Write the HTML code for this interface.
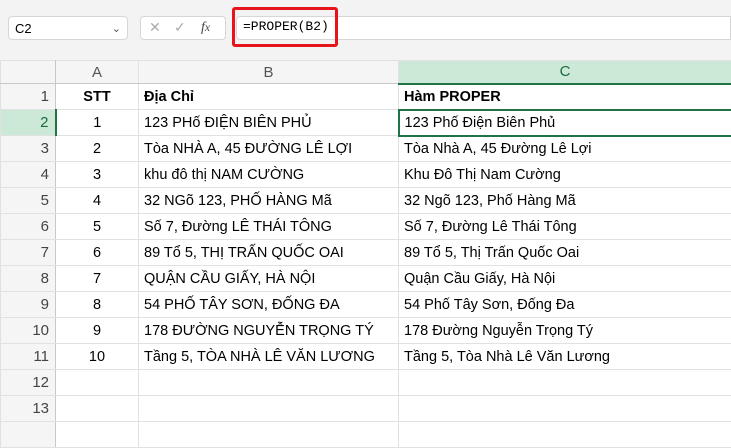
<html><head><style>
body{margin:0;width:731px;height:429px;overflow:hidden;background:#fff;font-family:"Liberation Sans",sans-serif;position:relative}
.top{position:absolute;left:0;top:0;width:731px;height:60px;background:#f3f3f3}
.nb{position:absolute;left:8px;top:16px;width:120px;height:24px;background:#fff;border:1px solid #d6d6d6;border-radius:4px;font-size:13px;line-height:24px;padding-left:6px;box-sizing:border-box}
.fx{position:absolute;left:140px;top:16px;width:86px;height:24px;background:#fff;border:1px solid #d6d6d6;border-radius:4px;box-sizing:border-box;color:#aaa;font-size:14px}
.fb{position:absolute;left:236px;top:16px;width:495px;height:24px;background:#fff;border:1px solid #d6d6d6;border-radius:4px 0 0 4px;box-sizing:border-box}
.red{position:absolute;left:232px;top:7px;width:106px;height:40px;border:3px solid #e8141c;border-radius:3px;box-sizing:border-box;font-family:"Liberation Mono",monospace;font-size:13px;line-height:34px;padding-left:8px}
table{position:absolute;left:0;top:60px;border-collapse:collapse;font-size:14.5px;table-layout:fixed;width:731px}
tr{height:26px}
td{border:1px solid #e1e1e1;padding:0 0 0 5px;white-space:nowrap;overflow:hidden}
td.h{background:#f5f5f5;color:#444;text-align:right;padding-right:6px;border-right:1px solid #c8c8c8;font-size:15px}
tr.ch{height:23px}
tr.ch td{background:#f5f5f5;color:#555;text-align:center;border-bottom:1px solid #c8c8c8;font-size:15px;padding:0}
tr.ch td.sel{background:#cbe9d6;color:#1d6b3e;border-bottom:2px solid #217346}
td.c{text-align:center;padding:0}
</style></head><body>
<div class="top"></div>
<div class="nb">C2<span style="position:absolute;right:6px;top:0;color:#555;font-size:11px">&#8964;</span></div>
<div class="fx"><span style="position:absolute;left:8px;top:2px">✕</span><span style="position:absolute;left:33px;top:2px">✓</span><span style="position:absolute;left:60px;top:3px;color:#444;font-style:italic;font-family:'Liberation Serif',serif">f<small>x</small></span></div>
<div class="fb"></div>
<div class="red">=PROPER(B2)</div>
<table>
<colgroup><col style="width:55px"><col style="width:83px"><col style="width:260px"><col style="width:333px"></colgroup>
<tr class="ch"><td style="border-right:1px solid #c8c8c8"></td><td>A</td><td>B</td><td class="sel">C</td></tr>
<tr><td class="h">1</td><td class="c"><b>STT</b></td><td><b>Địa Chỉ</b></td><td><b>Hàm PROPER</b></td></tr>
<tr><td class="h" style="background:#cbe9d6;color:#1d6b3e;border-right:2px solid #217346">2</td><td class="c">1</td><td>123 PHố ĐIỆN BIÊN PHỦ</td><td style="border:2px solid #217346">123 Phố Điện Biên Phủ</td></tr>
<tr><td class="h">3</td><td class="c">2</td><td>Tòa NHÀ A, 45 ĐƯỜNG LÊ LỢI</td><td>Tòa Nhà A, 45 Đường Lê Lợi</td></tr>
<tr><td class="h">4</td><td class="c">3</td><td>khu đô thị NAM CƯỜNG</td><td>Khu Đô Thị Nam Cường</td></tr>
<tr><td class="h">5</td><td class="c">4</td><td>32 NGõ 123, PHỐ HÀNG Mã</td><td>32 Ngõ 123, Phố Hàng Mã</td></tr>
<tr><td class="h">6</td><td class="c">5</td><td>Số 7, Đường LÊ THÁI TÔNG</td><td>Số 7, Đường Lê Thái Tông</td></tr>
<tr><td class="h">7</td><td class="c">6</td><td>89 Tổ 5, THỊ TRẤN QUỐC OAI</td><td>89 Tổ 5, Thị Trấn Quốc Oai</td></tr>
<tr><td class="h">8</td><td class="c">7</td><td>QUẬN CẦU GIẤY, HÀ NỘI</td><td>Quận Cầu Giấy, Hà Nội</td></tr>
<tr><td class="h">9</td><td class="c">8</td><td>54 PHỐ TÂY SƠN, ĐỐNG ĐA</td><td>54 Phố Tây Sơn, Đống Đa</td></tr>
<tr><td class="h">10</td><td class="c">9</td><td>178 ĐƯỜNG NGUYỄN TRỌNG TÝ</td><td>178 Đường Nguyễn Trọng Tý</td></tr>
<tr><td class="h">11</td><td class="c">10</td><td>Tầng 5, TÒA NHÀ LÊ VĂN LƯƠNG</td><td>Tầng 5, Tòa Nhà Lê Văn Lương</td></tr>
<tr><td class="h">12</td><td></td><td></td><td></td></tr>
<tr><td class="h">13</td><td></td><td></td><td></td></tr>
<tr><td class="h"></td><td></td><td></td><td></td></tr>
</table>
</body></html>
